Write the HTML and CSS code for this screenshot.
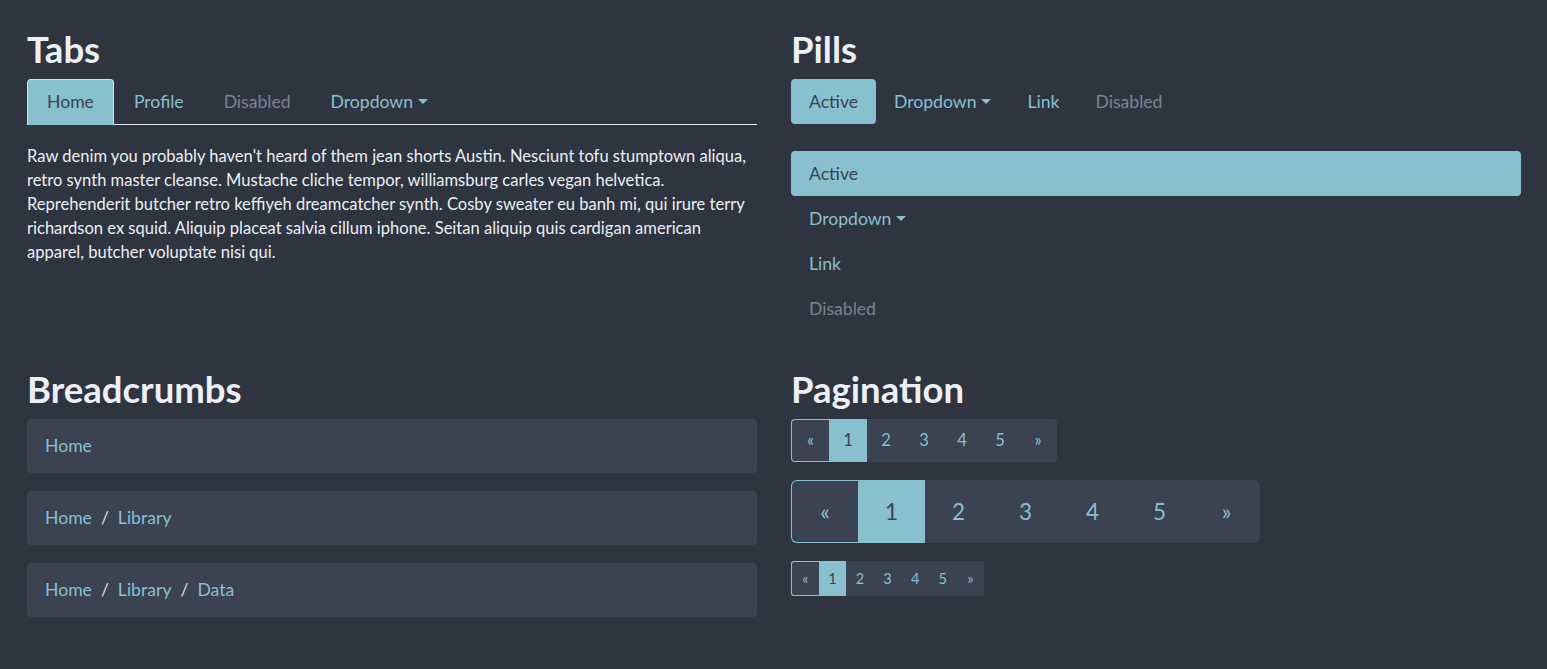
FILE: index.html
```html
<!DOCTYPE html>
<html>
<head>
<meta charset="utf-8">
<link rel="stylesheet" href="styles.css">
</head>
<body>
<div class="wrap">
  <section class="col">
    <h2 class="title">Tabs</h2>
    <ul class="nav-tabs">
      <li><a class="tab active">Home</a></li>
      <li><a class="tab">Profile</a></li>
      <li><a class="tab disabled">Disabled</a></li>
      <li><a class="tab">Dropdown<span class="caret"></span></a></li>
    </ul>
    <div class="tab-content">
      <p>Raw denim you probably haven't heard of them jean shorts Austin. Nesciunt tofu stumptown aliqua, retro synth master cleanse. Mustache cliche tempor, williamsburg carles vegan helvetica. Reprehenderit butcher retro keffiyeh dreamcatcher synth. Cosby sweater eu banh mi, qui irure terry richardson ex squid. Aliquip placeat salvia cillum iphone. Seitan aliquip quis cardigan american apparel, butcher voluptate nisi qui.</p>
    </div>
  </section>
  <section class="col">
    <h2 class="title">Pills</h2>
    <ul class="nav-pills">
      <li><a class="pill active">Active</a></li>
      <li><a class="pill">Dropdown<span class="caret"></span></a></li>
      <li><a class="pill">Link</a></li>
      <li><a class="pill disabled">Disabled</a></li>
    </ul>
    <ul class="nav-pills vertical">
      <li><a class="pill active">Active</a></li>
      <li><a class="pill">Dropdown<span class="caret"></span></a></li>
      <li><a class="pill">Link</a></li>
      <li><a class="pill disabled">Disabled</a></li>
    </ul>
  </section>
  <section class="col">
    <h2 class="title">Breadcrumbs</h2>
    <ol class="breadcrumb">
      <li><a>Home</a></li>
    </ol>
    <ol class="breadcrumb">
      <li><a>Home</a></li>
      <li><a>Library</a></li>
    </ol>
    <ol class="breadcrumb">
      <li><a>Home</a></li>
      <li><a>Library</a></li>
      <li><a>Data</a></li>
    </ol>
  </section>
  <section class="col">
    <h2 class="title">Pagination</h2>
    <ul class="pagination">
      <li class="pg first">&laquo;</li>
      <li class="pg active">1</li>
      <li class="pg">2</li>
      <li class="pg">3</li>
      <li class="pg">4</li>
      <li class="pg">5</li>
      <li class="pg">&raquo;</li>
    </ul>
    <ul class="pagination lg">
      <li class="pg first">&laquo;</li>
      <li class="pg active">1</li>
      <li class="pg">2</li>
      <li class="pg">3</li>
      <li class="pg">4</li>
      <li class="pg">5</li>
      <li class="pg">&raquo;</li>
    </ul>
    <ul class="pagination sm">
      <li class="pg first">&laquo;</li>
      <li class="pg active">1</li>
      <li class="pg">2</li>
      <li class="pg">3</li>
      <li class="pg">4</li>
      <li class="pg">5</li>
      <li class="pg">&raquo;</li>
    </ul>
  </section>
</div>
</body>
</html>
```

FILE: styles.css
```css
* { box-sizing: border-box; }
html, body {
  margin: 0;
  padding: 0;
  background: #2e3440;
  color: #eceff4;
  font-family: Lato, "Open Sans", sans-serif;
  font-size: 16px;
  line-height: 24px;
}
ul, ol { list-style: none; margin: 0; padding: 0; }
a { color: #88c0d0; text-decoration: none; }

.wrap {
  display: grid;
  grid-template-columns: 730px 730px;
  column-gap: 34px;
  row-gap: 37px;
  padding: 28px 26px 0 27px;
}

.title {
  margin: 0 0 8px;
  font-size: 36.5px;
  line-height: 43px;
  font-weight: 700;
  color: #eceff4;
}

.caret {
  display: inline-block;
  margin-left: 5px;
  vertical-align: 4px;
  border-top: 5px solid #88c0d0;
  border-left: 5px solid transparent;
  border-right: 5px solid transparent;
}

/* tabs */
.nav-tabs {
  display: flex;
  border-bottom: 1px solid #e5e9f0;
}
.tab {
  display: block;
  margin-bottom: -1px;
  padding: 10px 19px;
  border: 1px solid transparent;
  border-radius: 4px 4px 0 0;
  font-size: 17.6px;
  line-height: 24px;
  color: #88c0d0;
}
.tab.active {
  background: #88c0d0;
  color: #3b4252;
  border-color: #d8dee9 #d8dee9 #88c0d0;
}
.tab.disabled, .pill.disabled { color: #7b8393; }

.tab-content { padding-top: 19px; }
.tab-content p { margin: 0; font-size: 16.55px; }

/* pills */
.nav-pills { display: flex; }
.pill {
  display: block;
  padding: 10px 18px;
  border-radius: 4px;
  font-size: 17.6px;
  line-height: 25px;
  color: #88c0d0;
}
.pill.active { background: #88c0d0; color: #3b4252; }
.nav-pills.vertical { flex-direction: column; margin-top: 27px; }

/* breadcrumbs */
.breadcrumb {
  display: flex;
  margin-bottom: 18px;
  padding: 15px 18px;
  background: #3b4252;
  border-radius: 4px;
  font-size: 17.6px;
  line-height: 24px;
}
.breadcrumb li + li::before {
  content: "/";
  padding: 0 9px;
  color: #d8dee9;
}

/* pagination */
.pagination {
  display: flex;
  width: max-content;
  margin-bottom: 18px;
  background: #3b4252;
  border-radius: 4px;
}
.pg {
  width: 38px;
  padding: 9px 0;
  text-align: center;
  font-size: 16.5px;
  line-height: 25px;
  color: #88c0d0;
}
.pg.active { background: #88c0d0; color: #3b4252; }
.pg.first {
  border: 1px solid #88c0d0;
  border-right: 0;
  border-radius: 4px 0 0 4px;
  padding: 8px 0;
}
.pagination.lg { border-radius: 6px; }
.pagination.lg .pg {
  width: 67px;
  padding: 16px 0;
  font-size: 22.5px;
  line-height: 31px;
}
.pagination.lg .pg.first { padding: 15px 0; border-radius: 6px 0 0 6px; }
.pagination.sm { border-radius: 3px; }
.pagination.sm .pg {
  width: 27.6px;
  padding: 6px 0;
  font-size: 14.5px;
  line-height: 23px;
}
.pagination.sm .pg.first { padding: 5px 0; border-radius: 3px 0 0 3px; }
```
